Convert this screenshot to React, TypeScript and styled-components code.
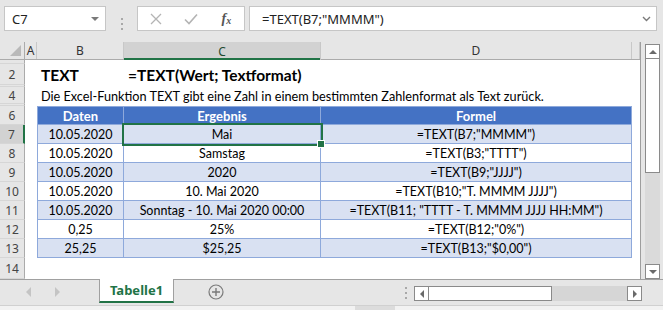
import { createGlobalStyle, styled } from "styled-components";

const GREEN = "#217346";
const UI_FONT = `"Noto Sans", "Open Sans", sans-serif`;
const CELL_FONT = `Lato, "Liberation Sans", sans-serif`;

const GlobalStyle = createGlobalStyle`
  html, body { margin: 0; padding: 0; background: #ffffff; }
  * { box-sizing: border-box; }
`;

type Tone = "head" | "odd" | "even";

type RowDef = {
  n: number;
  h: number;
  kind: "blank" | "title" | "desc" | "table";
  tone?: Tone;
  cells?: string[];
};

const ROWS: RowDef[] = [
  { n: 1, h: 4, kind: "blank" },
  { n: 2, h: 21, kind: "title", cells: ["TEXT", "=TEXT(Wert; Textformat)"] },
  { n: 3, h: 2, kind: "blank" },
  {
    n: 4,
    h: 17,
    kind: "desc",
    cells: [
      "Die Excel-Funktion TEXT gibt eine Zahl in einem bestimmten Zahlenformat als Text zurück.",
    ],
  },
  { n: 5, h: 2, kind: "blank" },
  { n: 6, h: 19, kind: "table", tone: "head", cells: ["Daten", "Ergebnis", "Formel"] },
  { n: 7, h: 19, kind: "table", tone: "odd", cells: ["10.05.2020", "Mai", '=TEXT(B7;"MMMM")'] },
  { n: 8, h: 19, kind: "table", tone: "even", cells: ["10.05.2020", "Samstag", '=TEXT(B3;"TTTT")'] },
  { n: 9, h: 19, kind: "table", tone: "odd", cells: ["10.05.2020", "2020", '=TEXT(B9;"JJJJ")'] },
  {
    n: 10,
    h: 19,
    kind: "table",
    tone: "even",
    cells: ["10.05.2020", "10. Mai 2020", '=TEXT(B10;"T. MMMM JJJJ")'],
  },
  {
    n: 11,
    h: 19,
    kind: "table",
    tone: "odd",
    cells: ["10.05.2020", "Sonntag - 10. Mai 2020 00:00", '=TEXT(B11; "TTTT - T. MMMM JJJJ HH:MM")'],
  },
  { n: 12, h: 19, kind: "table", tone: "even", cells: ["0,25", "25%", '=TEXT(B12;"0%")'] },
  { n: 13, h: 19, kind: "table", tone: "odd", cells: ["25,25", "$25,25", '=TEXT(B13;"$0,00")'] },
  { n: 14, h: 21, kind: "blank" },
];

// column widths: A, B, C, D, rest
const W = { a: 12, b: 87, c: 197, d: 311, rest: 8 };

export default function App() {
  return (
    <>
      <GlobalStyle />
      <Window>
        <FormulaBar>
          <NameBox>
            <span>C7</span>
            <DropTriangle />
          </NameBox>
          <Grip>
            <i />
            <i />
            <i />
          </Grip>
          <FnBox>
            <FnSlot>
              <svg width="12" height="12" viewBox="0 0 12 12">
                <path d="M1 1 L11 11 M11 1 L1 11" stroke="#b4b4b4" strokeWidth="1.3" fill="none" />
              </svg>
            </FnSlot>
            <FnSlot>
              <svg width="14" height="12" viewBox="0 0 14 12">
                <path d="M1 6.5 L5 10.5 L13 1.5" stroke="#b4b4b4" strokeWidth="1.6" fill="none" />
              </svg>
            </FnSlot>
            <FnSlot>
              <FxText>
                f<sub>x</sub>
              </FxText>
            </FnSlot>
          </FnBox>
          <FormulaInput>
            <span>=TEXT(B7;"MMMM")</span>
            <svg width="9" height="6" viewBox="0 0 9 6">
              <path d="M1 1 L4.5 4.5 L8 1" stroke="#7a7a7a" strokeWidth="1.4" fill="none" />
            </svg>
          </FormulaInput>
        </FormulaBar>

        <SheetArea>
          <Sheet>
            <ColHeaderRow>
              <Corner>
                <CornerTriangle />
              </Corner>
              <ColHead $w={W.a}>A</ColHead>
              <ColHead $w={W.b}>B</ColHead>
              <ColHead $w={W.c} $active>
                C
              </ColHead>
              <ColHead $w={W.d}>D</ColHead>
              <ColHead $w={W.rest} />
            </ColHeaderRow>

            {ROWS.map((row) => (
              <Row key={row.n} $h={row.h}>
                {/* rows squeezed to a few pixels show no readable number */}
                <RowHead $active={row.n === 7}>{row.h > 10 ? row.n : null}</RowHead>
                <Blank $w={W.a} />
                {row.kind === "table" && row.cells && (
                  <>
                    <TableCell $w={W.b} $tone={row.tone!} $first>
                      {row.cells[0]}
                    </TableCell>
                    <TableCell $w={W.c} $tone={row.tone!} $selected={row.n === 7}>
                      {row.cells[1]}
                    </TableCell>
                    <TableCell $w={W.d} $tone={row.tone!}>
                      {row.cells[2]}
                    </TableCell>
                  </>
                )}
                {row.kind === "title" && row.cells && (
                  <>
                    <TitleCell $w={W.b}>{row.cells[0]}</TitleCell>
                    <TitleCell $w={W.c}>{row.cells[1]}</TitleCell>
                    <Blank $w={W.d} />
                  </>
                )}
                {row.kind === "desc" && row.cells && (
                  <>
                    <DescCell $w={W.b}>{row.cells[0]}</DescCell>
                    <Blank $w={W.c} />
                    <Blank $w={W.d} />
                  </>
                )}
                {row.kind === "blank" && (
                  <>
                    <Blank $w={W.b} />
                    <Blank $w={W.c} />
                    <Blank $w={W.d} />
                  </>
                )}
                <Blank $w={W.rest} />
              </Row>
            ))}
          </Sheet>

          <VScroll>
            <ScrollBtn>
              <Tri $dir="up" />
            </ScrollBtn>
            <VThumb />
            <VTrack />
            <ScrollBtn>
              <Tri $dir="down" />
            </ScrollBtn>
          </VScroll>
        </SheetArea>

        <TabBar>
          <TabNav>
            <Tri $dir="left" $light />
            <Tri $dir="right" $light />
          </TabNav>
          <SheetTab>Tabelle1</SheetTab>
          <AddSheet>
            <svg width="16" height="16" viewBox="0 0 16 16">
              <circle cx="8" cy="8" r="7" stroke="#7a7a7a" strokeWidth="1.2" fill="none" />
              <path d="M8 4 V12 M4 8 H12" stroke="#7a7a7a" strokeWidth="1.4" />
            </svg>
          </AddSheet>
          <Spacer />
          <Grip $small>
            <i />
            <i />
            <i />
          </Grip>
          <HScroll>
            <ScrollBtn>
              <Tri $dir="left" />
            </ScrollBtn>
            <HThumb />
            <HTrack />
            <ScrollBtn>
              <Tri $dir="right" />
            </ScrollBtn>
          </HScroll>
        </TabBar>
        <StatusStrip>
          <StatusBlock />
        </StatusStrip>
      </Window>
    </>
  );
}

const Window = styled.div`
  width: 663px;
  height: 310px;
  background: #e6e6e6;
  display: flex;
  flex-direction: column;
  overflow: hidden;
`;

const FormulaBar = styled.div`
  height: 42px;
  flex: none;
  display: flex;
  align-items: flex-start;
  padding: 6px 6px 0 4px;
`;

const NameBox = styled.div`
  width: 102px;
  height: 25px;
  background: #ffffff;
  border: 1px solid #c6c6c6;
  display: flex;
  align-items: center;
  justify-content: space-between;
  padding: 0 6px 0 7px;
  font: 13px ${UI_FONT};
  color: #222;
`;

const DropTriangle = styled.span`
  width: 0;
  height: 0;
  border-left: 4px solid transparent;
  border-right: 4px solid transparent;
  border-top: 4px solid #7a7a7a;
`;

const Grip = styled.div<{ $small?: boolean }>`
  width: ${({ $small }) => ($small ? "16px" : "31px")};
  height: ${({ $small }) => ($small ? "auto" : "25px")};
  align-self: center;
  display: flex;
  flex-direction: column;
  align-items: center;
  justify-content: center;
  gap: 3px;
  flex: none;

  i {
    display: block;
    width: 2px;
    height: 2px;
    background: #a8a8a8;
  }
`;

const FnBox = styled.div`
  width: 108px;
  height: 25px;
  background: #ffffff;
  border: 1px solid #c6c6c6;
  display: flex;
  flex: none;
`;

const FnSlot = styled.div`
  width: 36px;
  display: flex;
  align-items: center;
  justify-content: center;
`;

const FxText = styled.span`
  font: italic bold 14px "Liberation Serif", serif;
  color: #555555;
  sub {
    font-size: 10px;
    vertical-align: -1px;
  }
`;

const FormulaInput = styled.div`
  margin-left: 4px;
  flex: 1;
  height: 25px;
  background: #ffffff;
  border: 1px solid #c6c6c6;
  display: flex;
  align-items: center;
  justify-content: space-between;
  padding: 0 5px 0 12px;
  font: 13px ${UI_FONT};
  color: #222;
`;

const SheetArea = styled.div`
  height: 237px;
  flex: none;
  display: flex;
`;

const Sheet = styled.div`
  width: 641px;
  display: flex;
  flex-direction: column;
  background: #ffffff;
  border-right: 1px solid #9e9e9e;
  overflow: hidden;
`;

const ColHeaderRow = styled.div`
  height: 18px;
  flex: none;
  display: flex;
  background: #e6e6e6;
  border-bottom: 1px solid #ababab;
`;

const Corner = styled.div`
  width: 25px;
  flex: none;
  position: relative;
  border-right: 1px solid #ababab;
`;

const CornerTriangle = styled.span`
  position: absolute;
  right: 3px;
  bottom: 3px;
  width: 0;
  height: 0;
  border-left: 11px solid transparent;
  border-bottom: 11px solid #b9b9b9;
`;

const ColHead = styled.div<{ $w: number; $active?: boolean }>`
  width: ${({ $w }) => $w}px;
  flex: none;
  display: flex;
  align-items: center;
  justify-content: center;
  font: 12px ${UI_FONT};
  color: ${({ $active }) => ($active ? "#1e4a2f" : "#333333")};
  background: ${({ $active }) => ($active ? "#d2d2d2" : "transparent")};
  border-right: 1px solid #c8c8c8;
  box-shadow: ${({ $active }) => ($active ? `inset 0 -2px 0 ${GREEN}` : "none")};
  margin-bottom: ${({ $active }) => ($active ? "-1px" : "0")};
`;

const Row = styled.div<{ $h: number }>`
  height: ${({ $h }) => $h}px;
  flex: none;
  display: flex;
`;

const RowHead = styled.div<{ $active?: boolean }>`
  width: 25px;
  flex: none;
  display: flex;
  align-items: center;
  justify-content: center;
  overflow: hidden;
  font: 12px ${UI_FONT};
  color: #444444;
  background: ${({ $active }) => ($active ? "#d2d2d2" : "#e6e6e6")};
  border-bottom: 1px solid #d6d6d6;
  border-right: ${({ $active }) => ($active ? `2px solid ${GREEN}` : "1px solid #ababab")};
`;

const Blank = styled.div<{ $w: number }>`
  width: ${({ $w }) => $w}px;
  flex: none;
`;

const TONE_BG: Record<Tone, string> = {
  head: "#4472c4",
  odd: "#d9e1f2",
  even: "#ffffff",
};

const TableCell = styled.div<{
  $w: number;
  $tone: Tone;
  $first?: boolean;
  $selected?: boolean;
}>`
  width: ${({ $w }) => $w}px;
  flex: none;
  position: relative;
  display: flex;
  align-items: center;
  justify-content: center;
  white-space: nowrap;
  font: ${({ $tone }) => ($tone === "head" ? "bold 13px" : "normal 12.5px")} ${CELL_FONT};
  color: ${({ $tone }) => ($tone === "head" ? "#ffffff" : "#000000")};
  background: ${({ $tone }) => TONE_BG[$tone]};
  border-right: 1px solid #8ea9db;
  border-bottom: 1px solid #8ea9db;
  border-top: ${({ $tone }) => ($tone === "head" ? "1px solid #8ea9db" : "none")};
  border-left: ${({ $first }) => ($first ? "1px solid #8ea9db" : "none")};
  ${({ $selected }) =>
    $selected &&
    `
    z-index: 2;
    outline: 2px solid ${GREEN};
    outline-offset: 0px;
    &::after {
      content: "";
      position: absolute;
      right: -5px;
      bottom: -5px;
      width: 6px;
      height: 6px;
      background: ${GREEN};
      border: 1px solid #ffffff;
    }
  `}
`;

const TitleCell = styled.div<{ $w: number }>`
  width: ${({ $w }) => $w}px;
  flex: none;
  display: flex;
  align-items: center;
  padding-left: 4px;
  white-space: nowrap;
  font: bold 15.5px ${CELL_FONT};
  color: #000000;
`;

const DescCell = styled.div<{ $w: number }>`
  width: ${({ $w }) => $w}px;
  flex: none;
  display: flex;
  align-items: center;
  padding-left: 4px;
  white-space: nowrap;
  overflow: visible;
  font: 12.7px ${CELL_FONT};
  color: #000000;
`;

const VScroll = styled.div`
  width: 22px;
  flex: none;
  display: flex;
  flex-direction: column;
  padding: 2px 3px 0 4px;
`;

const ScrollBtn = styled.div`
  width: 15px;
  height: 15px;
  flex: none;
  background: #ffffff;
  border: 1px solid #8a8a8a;
  display: flex;
  align-items: center;
  justify-content: center;
`;

const Tri = styled.span<{ $dir: "up" | "down" | "left" | "right"; $light?: boolean }>`
  width: 0;
  height: 0;
  ${({ $dir, $light }) => {
    const c = $light ? "#c4c4c4" : "#6a6a6a";
    const s = $light ? 5 : 4;
    if ($dir === "up")
      return `border-left:${s}px solid transparent;border-right:${s}px solid transparent;border-bottom:${s}px solid ${c};`;
    if ($dir === "down")
      return `border-left:${s}px solid transparent;border-right:${s}px solid transparent;border-top:${s}px solid ${c};`;
    if ($dir === "left")
      return `border-top:${s}px solid transparent;border-bottom:${s}px solid transparent;border-right:${s}px solid ${c};`;
    return `border-top:${s}px solid transparent;border-bottom:${s}px solid transparent;border-left:${s}px solid ${c};`;
  }}
`;

const VThumb = styled.div`
  height: 114px;
  flex: none;
  background: #ffffff;
  border: 1px solid #8a8a8a;
  border-top: none;
`;

const VTrack = styled.div`
  flex: 1;
  background: #dadada;
`;

const TabBar = styled.div`
  height: 26px;
  flex: none;
  display: flex;
  align-items: flex-start;
  border-top: 1px solid #a0a0a0;
`;

const TabNav = styled.div`
  width: 99px;
  height: 24px;
  flex: none;
  display: flex;
  align-items: center;
  gap: 24px;
  padding-left: 26px;
`;

const SheetTab = styled.div`
  width: 75px;
  height: 24px;
  flex: none;
  margin-top: -1px;
  display: flex;
  align-items: center;
  justify-content: center;
  background: #ffffff;
  border-left: 1px solid #a0a0a0;
  border-right: 1px solid #a0a0a0;
  border-bottom: 2px solid ${GREEN};
  font: bold 13px ${UI_FONT};
  color: ${GREEN};
`;

const AddSheet = styled.div`
  margin-left: 34px;
  height: 24px;
  display: flex;
  align-items: center;
`;

const Spacer = styled.div`
  flex: 1;
`;

const HScroll = styled.div`
  width: 228px;
  height: 15px;
  margin-top: 6px;
  margin-right: 21px;
  flex: none;
  display: flex;
`;

const HThumb = styled.div`
  width: 123px;
  flex: none;
  background: #ffffff;
  border: 1px solid #8a8a8a;
  border-left: none;
`;

const HTrack = styled.div`
  flex: 1;
  background: #d6d6d6;
`;

const StatusStrip = styled.div`
  flex: 1;
  background: #f2f2f2;
  border-top: 1px solid #d0d0d0;
  padding-left: 355px;
`;

const StatusBlock = styled.div`
  width: 40px;
  height: 100%;
  background: #dcdcdc;
`;
